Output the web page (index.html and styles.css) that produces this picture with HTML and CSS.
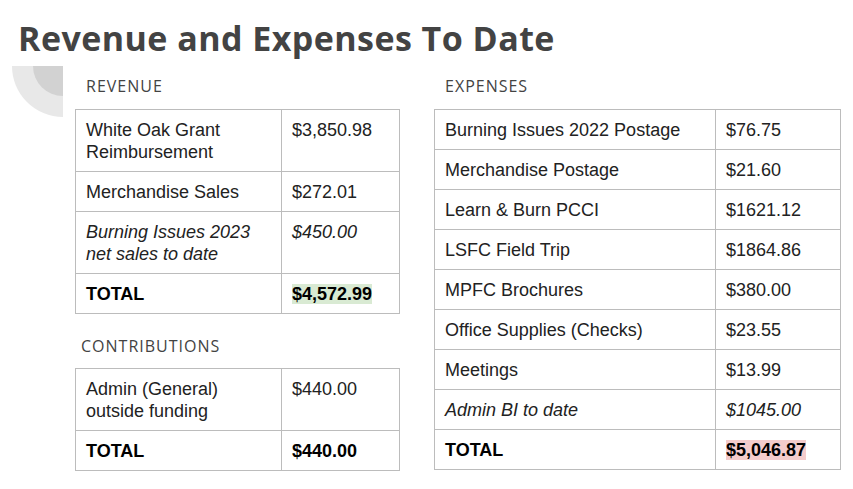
FILE: index.html
```html
<!DOCTYPE html>
<html>
<head>
<meta charset="utf-8">
<link rel="stylesheet" href="styles.css">
</head>
<body>
<div class="slide">
  <div class="deco"><div class="deco-inner"></div></div>
  <h1 class="title">Revenue and Expenses To Date</h1>
  <div class="main">
    <div class="col col-left">
      <div class="label">REVENUE</div>
      <table class="tbl tbl-left">
        <colgroup><col class="c1"><col></colgroup>
        <tr><td>White Oak Grant Reimbursement</td><td>$3,850.98</td></tr>
        <tr><td>Merchandise Sales</td><td>$272.01</td></tr>
        <tr class="it"><td>Burning Issues 2023 net sales to date</td><td>$450.00</td></tr>
        <tr class="tot"><td>TOTAL</td><td><span class="hl-green">$4,572.99</span></td></tr>
      </table>
      <div class="label label-contrib">CONTRIBUTIONS</div>
      <table class="tbl tbl-left">
        <colgroup><col class="c1"><col></colgroup>
        <tr><td>Admin (General) outside funding</td><td>$440.00</td></tr>
        <tr class="tot"><td>TOTAL</td><td>$440.00</td></tr>
      </table>
    </div>
    <div class="col col-right">
      <div class="label">EXPENSES</div>
      <table class="tbl tbl-right">
        <colgroup><col class="c1r"><col></colgroup>
        <tr><td>Burning Issues 2022 Postage</td><td>$76.75</td></tr>
        <tr><td>Merchandise Postage</td><td>$21.60</td></tr>
        <tr><td>Learn &amp; Burn PCCI</td><td>$1621.12</td></tr>
        <tr><td>LSFC Field Trip</td><td>$1864.86</td></tr>
        <tr><td>MPFC Brochures</td><td>$380.00</td></tr>
        <tr><td>Office Supplies (Checks)</td><td>$23.55</td></tr>
        <tr><td>Meetings</td><td>$13.99</td></tr>
        <tr class="it"><td>Admin BI to date</td><td>$1045.00</td></tr>
        <tr class="tot"><td>TOTAL</td><td><span class="hl-red">$5,046.87</span></td></tr>
      </table>
    </div>
  </div>
</div>
</body>
</html>
```

FILE: styles.css
```css
* { box-sizing: border-box; }
html, body { margin: 0; padding: 0; background: #fff; }
.slide {
  position: relative;
  width: 853px;
  height: 489px;
  overflow: hidden;
}
.deco {
  position: absolute;
  left: 12px;
  top: 66px;
  width: 51px;
  height: 51px;
  background: #e8e8e8;
  border-bottom-left-radius: 51px;
  display: flex;
  justify-content: flex-end;
}
.deco-inner {
  width: 30px;
  height: 30px;
  background: #d2d2d2;
  border-bottom-left-radius: 30px;
}
.title {
  position: relative;
  margin: 22px 0 0 18px;
  font-family: "Open Sans", sans-serif;
  font-weight: 700;
  font-size: 34px;
  line-height: 32px;
  letter-spacing: 0.45px;
  color: #434343;
}
.main {
  position: relative;
  display: flex;
  gap: 34px;
  padding-left: 75px;
  margin-top: 22px;
}
.col-left { width: 325px; }
.col-right { width: 407px; }
.label {
  font-family: "Open Sans", sans-serif;
  font-size: 16px;
  font-weight: 500;
  line-height: 20px;
  letter-spacing: 1px;
  color: #434343;
  padding-left: 11px;
  margin-bottom: 13px;
}
.label-contrib {
  padding-left: 6px;
  margin-top: 22px;
  margin-bottom: 12px;
}
.tbl {
  border-collapse: collapse;
  table-layout: fixed;
  font-family: "Liberation Sans", Arial, sans-serif;
  font-size: 18px;
  line-height: 22px;
  color: #222;
}
.tbl-left { width: 325px; }
.tbl-right { width: 407px; }
.c1 { width: 206px; }
.c1r { width: 281px; }
.tbl td {
  border: 1px solid #bcbcbc;
  padding: 9px 10px 8px 10px;
  vertical-align: top;
}
.it td { font-style: italic; }
.tot td { font-weight: 700; color: #000; }
.hl-green { background: #d9ead3; }
.hl-red { background: #f4cccc; }
```
